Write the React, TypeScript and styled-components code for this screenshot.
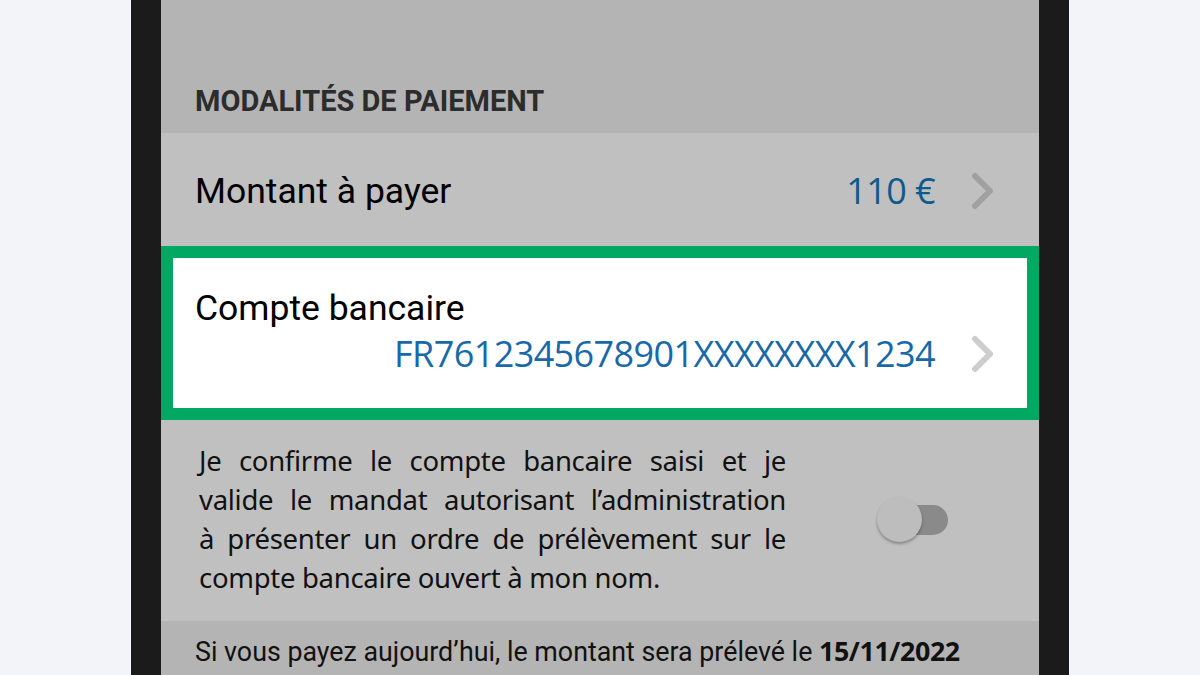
import React from "react";
import styled, { createGlobalStyle } from "styled-components";

const GlobalStyle = createGlobalStyle`
  html, body { margin: 0; padding: 0; }
  body {
    width: 1200px;
    height: 675px;
    overflow: hidden;
    background: #f3f4f9;
    font-family: Roboto, "Noto Sans", sans-serif;
  }
`;

const Page = styled.div`
  width: 1200px;
  height: 675px;
  display: flex;
  justify-content: center;
  background: #f3f4f9;
`;

const Phone = styled.div`
  width: 878px;
  height: 675px;
  border-left: 30px solid #1b1b1b;
  border-right: 30px solid #1b1b1b;
  display: flex;
  flex-direction: column;
  background: #b4b4b4;
`;

const SectionHeader = styled.div`
  height: 133px;
  box-sizing: border-box;
  display: flex;
  align-items: flex-end;
  padding: 0 34px 15px;
  background: #b4b4b4;
`;

const SectionTitle = styled.h2`
  margin: 0;
  font-family: Roboto, sans-serif;
  font-weight: 700;
  font-size: 29px;
  line-height: 34px;
  color: #2c2c2c;
`;

const Row = styled.div`
  height: 113px;
  box-sizing: border-box;
  display: flex;
  align-items: center;
  padding: 2px 44px 0 34px;
  background: #c0c0c0;
`;

const Label = styled.div`
  flex: 1;
  font-family: Roboto, sans-serif;
  font-size: 35.5px;
  line-height: 42px;
  color: #000;
`;

const Value = styled.div<{ $tone: "dim" | "bright" }>`
  font-family: "Open Sans", "Noto Sans", sans-serif;
  font-size: 36px;
  line-height: 44px;
  letter-spacing: -0.6px;
  color: ${(p) => (p.$tone === "dim" ? "#0d5a8d" : "#1769a9")};
`;

const ChevronWrap = styled.div`
  width: 24px;
  height: 38px;
  margin-left: 36px;
  display: flex;
  align-items: center;
  justify-content: center;
  flex-shrink: 0;
`;

const Card = styled.div`
  height: 174px;
  box-sizing: border-box;
  border: 12px solid #00a862;
  background: #ffffff;
  padding: 29px 32px 0 22px;
  display: flex;
  flex-direction: column;
`;

const CardLabel = styled.div`
  font-family: Roboto, sans-serif;
  font-size: 35.5px;
  line-height: 42px;
  color: #000;
`;

const CardValueRow = styled.div`
  display: flex;
  align-items: center;
  justify-content: flex-end;
  margin-top: 3px;
`;

const Consent = styled.div`
  height: 201px;
  box-sizing: border-box;
  display: flex;
  align-items: center;
  padding: 0 0 4px 38px;
  background: #c0c0c0;
`;

const ConsentText = styled.div`
  width: 587px;
  font-family: "Noto Sans", "Open Sans", sans-serif;
  font-size: 27.5px;
  line-height: 39px;
  letter-spacing: -0.3px;
  color: #111;
`;

const ConsentLine = styled.div<{ $last?: boolean }>`
  text-align: ${(p) => (p.$last ? "left" : "justify")};
  text-align-last: ${(p) => (p.$last ? "left" : "justify")};
  white-space: nowrap;
`;

const ToggleArea = styled.div`
  flex: 1;
  display: flex;
  justify-content: flex-start;
  padding-left: 91px;
`;

const Toggle = styled.div`
  position: relative;
  width: 71px;
  height: 46px;
`;

const Track = styled.div`
  position: absolute;
  left: 4px;
  right: 0;
  top: 9px;
  height: 30px;
  border-radius: 15px;
  background: #8a8a8a;
`;

const Knob = styled.div`
  position: absolute;
  left: 0;
  top: 1px;
  width: 45px;
  height: 45px;
  border-radius: 50%;
  background: #bdbdbd;
  box-shadow: 0 2px 3px rgba(0, 0, 0, 0.3);
`;

const Footer = styled.div`
  flex: 1;
  background: #b4b4b4;
  padding: 13px 34px 0;
`;

const FooterText = styled.div`
  font-family: Roboto, sans-serif;
  font-size: 26.8px;
  line-height: 34px;
  color: #111;
  white-space: nowrap;
`;

const FooterDate = styled.b`
  font-family: "Open Sans", "Noto Sans", sans-serif;
  font-weight: 700;
  letter-spacing: -0.4px;
`;

const Chevron = ({ color }: { color: string }) => (
  <ChevronWrap>
    <svg width="24" height="38" viewBox="0 0 24 38">
      <polyline
        points="4,4 19,19 4,34"
        fill="none"
        stroke={color}
        strokeWidth="6"
        strokeLinecap="round"
        strokeLinejoin="round"
      />
    </svg>
  </ChevronWrap>
);

const consentLines = [
  "Je confirme le compte bancaire saisi et je",
  "valide le mandat autorisant l’administration",
  "à présenter un ordre de prélèvement sur le",
  "compte bancaire ouvert à mon nom.",
];

export default function App() {
  return (
    <>
      <GlobalStyle />
      <Page>
        <Phone>
          <SectionHeader>
            <SectionTitle>MODALITÉS DE PAIEMENT</SectionTitle>
          </SectionHeader>
          <Row>
            <Label>Montant à payer</Label>
            <Value $tone="dim">110 €</Value>
            <Chevron color="#a0a0a0" />
          </Row>
          <Card>
            <CardLabel>Compte bancaire</CardLabel>
            <CardValueRow>
              <Value $tone="bright">FR7612345678901XXXXXXXX1234</Value>
              <Chevron color="#cdcdcd" />
            </CardValueRow>
          </Card>
          <Consent>
            <ConsentText>
              {consentLines.map((l, i) => (
                <ConsentLine key={i} $last={i === consentLines.length - 1}>
                  {l}
                </ConsentLine>
              ))}
            </ConsentText>
            <ToggleArea>
              <Toggle>
                <Track />
                <Knob />
              </Toggle>
            </ToggleArea>
          </Consent>
          <Footer>
            <FooterText>
              Si vous payez aujourd’hui, le montant sera prélevé le{" "}
              <FooterDate>15/11/2022</FooterDate>
            </FooterText>
          </Footer>
        </Phone>
      </Page>
    </>
  );
}
